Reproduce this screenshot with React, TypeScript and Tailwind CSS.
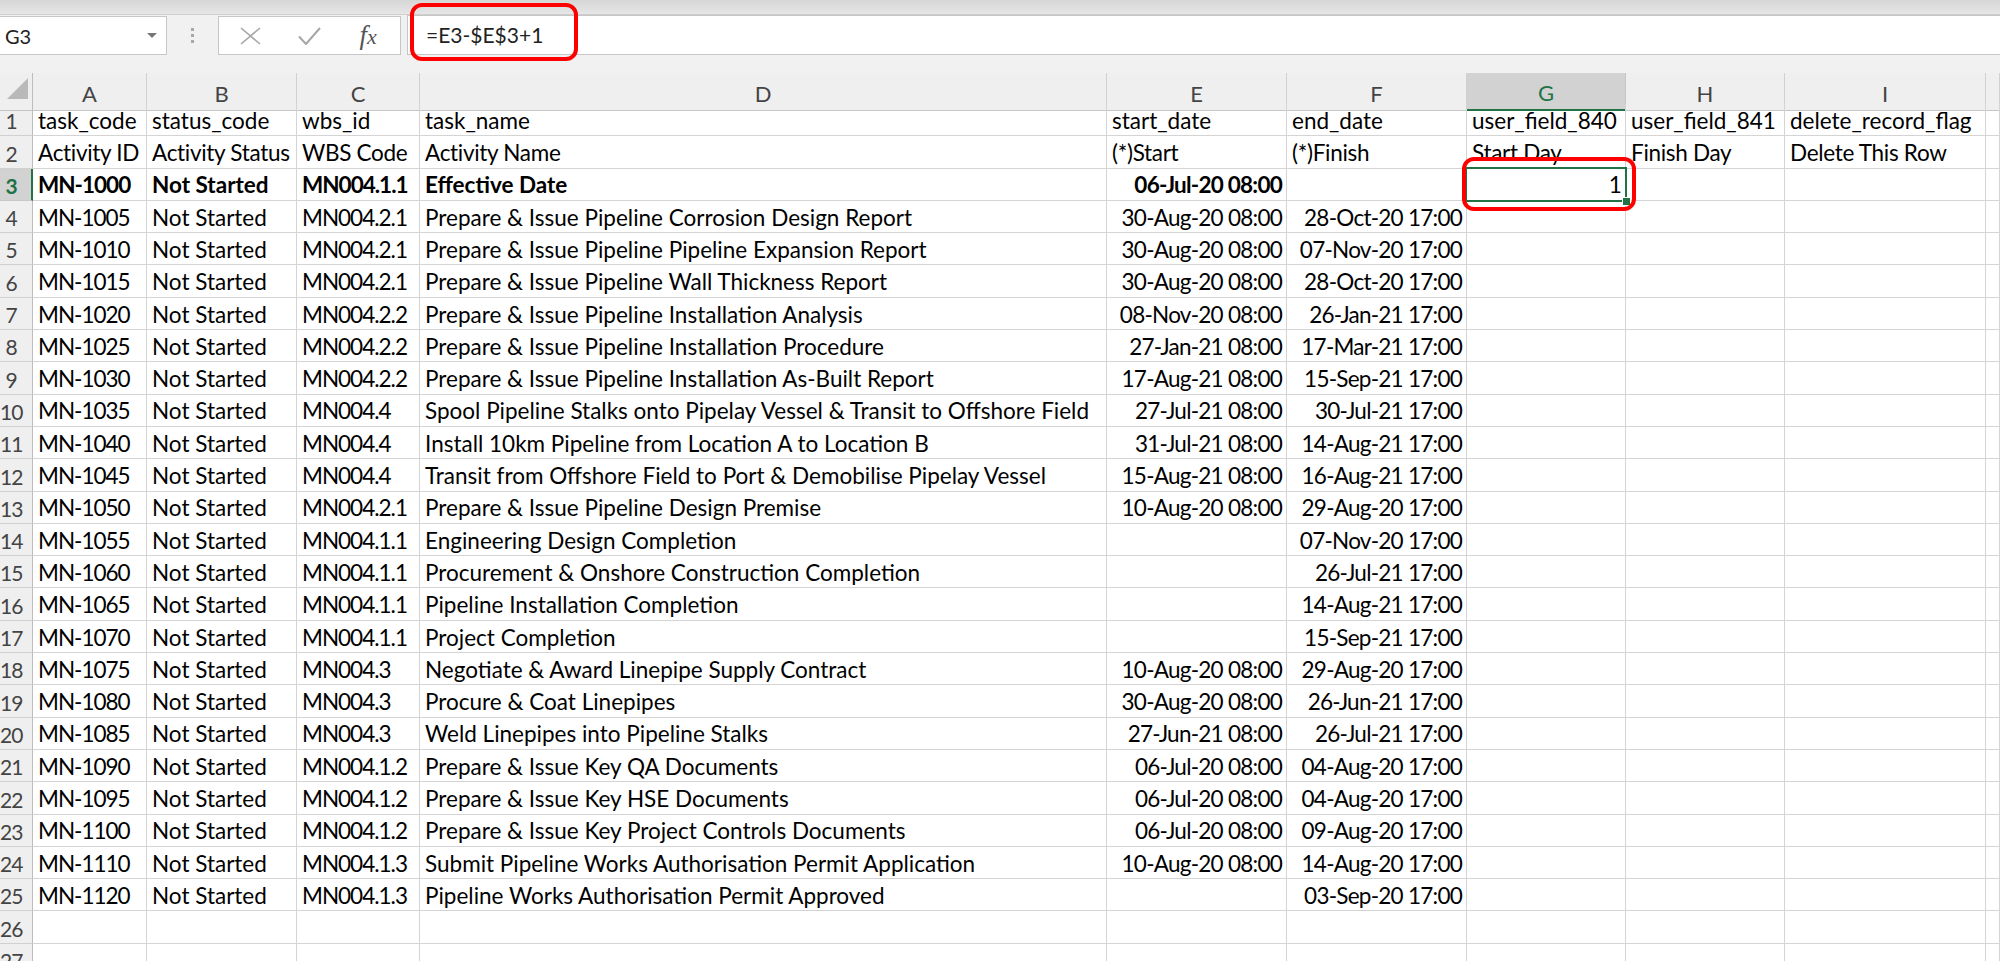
import React from "react"

type Row = {
  code: string
  status: string
  wbs: string
  name: string
  start: string
  finish: string
}

const rows: Row[] = [
  { code: "MN-1005", status: "Not Started", wbs: "MN004.2.1", name: "Prepare & Issue Pipeline Corrosion Design Report", start: "30-Aug-20 08:00", finish: "28-Oct-20 17:00" },
  { code: "MN-1010", status: "Not Started", wbs: "MN004.2.1", name: "Prepare & Issue Pipeline Pipeline Expansion Report", start: "30-Aug-20 08:00", finish: "07-Nov-20 17:00" },
  { code: "MN-1015", status: "Not Started", wbs: "MN004.2.1", name: "Prepare & Issue Pipeline Wall Thickness Report", start: "30-Aug-20 08:00", finish: "28-Oct-20 17:00" },
  { code: "MN-1020", status: "Not Started", wbs: "MN004.2.2", name: "Prepare & Issue Pipeline Installation Analysis", start: "08-Nov-20 08:00", finish: "26-Jan-21 17:00" },
  { code: "MN-1025", status: "Not Started", wbs: "MN004.2.2", name: "Prepare & Issue Pipeline Installation Procedure", start: "27-Jan-21 08:00", finish: "17-Mar-21 17:00" },
  { code: "MN-1030", status: "Not Started", wbs: "MN004.2.2", name: "Prepare & Issue Pipeline Installation As-Built Report", start: "17-Aug-21 08:00", finish: "15-Sep-21 17:00" },
  { code: "MN-1035", status: "Not Started", wbs: "MN004.4", name: "Spool Pipeline Stalks onto Pipelay Vessel & Transit to Offshore Field", start: "27-Jul-21 08:00", finish: "30-Jul-21 17:00" },
  { code: "MN-1040", status: "Not Started", wbs: "MN004.4", name: "Install 10km Pipeline from Location A to Location B", start: "31-Jul-21 08:00", finish: "14-Aug-21 17:00" },
  { code: "MN-1045", status: "Not Started", wbs: "MN004.4", name: "Transit from Offshore Field to Port & Demobilise Pipelay Vessel", start: "15-Aug-21 08:00", finish: "16-Aug-21 17:00" },
  { code: "MN-1050", status: "Not Started", wbs: "MN004.2.1", name: "Prepare & Issue Pipeline Design Premise", start: "10-Aug-20 08:00", finish: "29-Aug-20 17:00" },
  { code: "MN-1055", status: "Not Started", wbs: "MN004.1.1", name: "Engineering Design Completion", start: "", finish: "07-Nov-20 17:00" },
  { code: "MN-1060", status: "Not Started", wbs: "MN004.1.1", name: "Procurement & Onshore Construction Completion", start: "", finish: "26-Jul-21 17:00" },
  { code: "MN-1065", status: "Not Started", wbs: "MN004.1.1", name: "Pipeline Installation Completion", start: "", finish: "14-Aug-21 17:00" },
  { code: "MN-1070", status: "Not Started", wbs: "MN004.1.1", name: "Project Completion", start: "", finish: "15-Sep-21 17:00" },
  { code: "MN-1075", status: "Not Started", wbs: "MN004.3", name: "Negotiate & Award Linepipe Supply Contract", start: "10-Aug-20 08:00", finish: "29-Aug-20 17:00" },
  { code: "MN-1080", status: "Not Started", wbs: "MN004.3", name: "Procure & Coat Linepipes", start: "30-Aug-20 08:00", finish: "26-Jun-21 17:00" },
  { code: "MN-1085", status: "Not Started", wbs: "MN004.3", name: "Weld Linepipes into Pipeline Stalks", start: "27-Jun-21 08:00", finish: "26-Jul-21 17:00" },
  { code: "MN-1090", status: "Not Started", wbs: "MN004.1.2", name: "Prepare & Issue Key QA Documents", start: "06-Jul-20 08:00", finish: "04-Aug-20 17:00" },
  { code: "MN-1095", status: "Not Started", wbs: "MN004.1.2", name: "Prepare & Issue Key HSE Documents", start: "06-Jul-20 08:00", finish: "04-Aug-20 17:00" },
  { code: "MN-1100", status: "Not Started", wbs: "MN004.1.2", name: "Prepare & Issue Key Project Controls Documents", start: "06-Jul-20 08:00", finish: "09-Aug-20 17:00" },
  { code: "MN-1110", status: "Not Started", wbs: "MN004.1.3", name: "Submit Pipeline Works Authorisation Permit Application", start: "10-Aug-20 08:00", finish: "14-Aug-20 17:00" },
  { code: "MN-1120", status: "Not Started", wbs: "MN004.1.3", name: "Pipeline Works Authorisation Permit Approved", start: "", finish: "03-Sep-20 17:00" },
]

const grid =
  "grid grid-cols-[33px_114px_150px_123px_687px_180px_180px_159px_159px_201px_1fr]"

// Excel puts text at the bottom of the row
const cell = "border-r border-b border-[#d4d4d4] flex items-end pb-[3px] px-[5px] whitespace-nowrap leading-none"
// codes and dates: Lato digits run wider than the sheet's, so pull them in a little
const code = cell + " tracking-[-1px]"
const date = cell + " justify-end pr-[4px] tracking-[-0.75px]"
const label = cell + " tracking-[-0.3px]"

function RowHead({ n, active }: { n: number; active?: boolean }) {
  return (
    <div
      className={
        active
          ? "bg-[#d2d2d2] text-[#217346] border-r-2 border-r-[#217346] border-b border-b-[#c8c8c8] flex items-end pb-[4px] leading-none text-[21px] tracking-[-1px]"
          : "bg-[#efefef] text-[#444] border-r border-r-[#bdbdbd] border-b border-b-[#d0d0d0] flex items-end pb-[4px] leading-none text-[21px] tracking-[-1px]"
      }
    >
      <span className="w-[22px] text-center">{n}</span>
    </div>
  )
}

function ColHead({ label, active }: { label: string; active?: boolean }) {
  return (
    <div
      className={
        active
          ? "bg-[#d2d2d2] text-[#217346] border-r border-r-[#c6c6c6] border-b-2 border-b-[#217346] flex items-center justify-center pt-[3px] text-[22px]"
          : "bg-[#efefef] text-[#444] border-r border-r-[#d0d0d0] border-b border-b-[#c6c6c6] flex items-center justify-center pt-[3px] text-[22px]"
      }
    >
      {label}
    </div>
  )
}

function Blank({ n }: { n: number }) {
  return (
    <div className={grid + " h-[32.3px]"}>
      <RowHead n={n} />
      <div className={cell} />
      <div className={cell} />
      <div className={cell} />
      <div className={cell} />
      <div className={cell} />
      <div className={cell} />
      <div className={cell} />
      <div className={cell} />
      <div className={cell} />
      <div className={cell} />
    </div>
  )
}

export default function App() {
  return (
    <div className="relative w-[2000px] h-[961px] overflow-hidden bg-white text-[22.5px] text-black font-['Lato','Liberation_Sans',sans-serif]">
      {/* ribbon edge */}
      <div className="h-[15px] bg-gradient-to-b from-[#d6d6d6] to-[#e6e6e6] border-b border-[#cfcfcf]" />

      {/* formula bar */}
      <div className="h-[58px] bg-[#f1f1f1] flex items-start">
        <div className="mt-[1px] w-[167px] h-[39px] bg-white border border-l-0 border-[#c6c6c6] flex items-center justify-between pl-[5px] pr-[9px]">
          <span className="text-[20px] text-[#222]">G3</span>
          <span className="w-0 h-0 border-l-[5px] border-r-[5px] border-t-[5px] border-l-transparent border-r-transparent border-t-[#777]" />
        </div>
        <div className="w-[51px] h-[40px] flex flex-col items-center justify-center gap-[3px]">
          <span className="w-[3px] h-[3px] bg-[#a8a8a8]" />
          <span className="w-[3px] h-[3px] bg-[#a8a8a8]" />
          <span className="w-[3px] h-[3px] bg-[#a8a8a8]" />
        </div>
        <div className="mt-[1px] w-[183px] h-[39px] bg-white border border-[#c6c6c6] flex items-center">
          <div className="w-[64px] flex justify-center">
            <svg width="21" height="18" viewBox="0 0 21 18">
              <path d="M1 1 L20 17 M20 1 L1 17" stroke="#a6a6a6" strokeWidth="1.6" fill="none" />
            </svg>
          </div>
          <div className="w-[54px] flex justify-center">
            <svg width="23" height="18" viewBox="0 0 23 18">
              <path d="M1 9.5 L8 17 L22 1" stroke="#a6a6a6" strokeWidth="2" fill="none" />
            </svg>
          </div>
          <div className="w-[64px] flex justify-center">
            <span className="font-['Liberation_Serif',serif] italic text-[27px] text-[#555] leading-none">
              f<span className="text-[22px]">x</span>
            </span>
          </div>
        </div>
        <div className="ml-[6px] flex-1 h-[40px] bg-white border-y border-l border-[#c6c6c6] flex items-center pl-[18px]">
          <span className="text-[#222] text-[21px]">=E3-$E$3+1</span>
        </div>
      </div>

      {/* column headers */}
      <div className={grid + " h-[31px]"}>
        <div className="bg-[#efefef] border-r border-r-[#bdbdbd] border-b border-b-[#c6c6c6] relative">
          <svg className="absolute left-[7px] top-[5px]" width="22" height="21" viewBox="0 0 22 21">
            <path d="M21 0 L21 21 L0 21 Z" fill="#b9b9b9" />
          </svg>
        </div>
        <ColHead label="A" />
        <ColHead label="B" />
        <ColHead label="C" />
        <ColHead label="D" />
        <ColHead label="E" />
        <ColHead label="F" />
        <ColHead label="G" active />
        <ColHead label="H" />
        <ColHead label="I" />
        <ColHead label="" />
      </div>

      {/* row 1 */}
      <div className={grid + " h-[32.3px]"}>
        <RowHead n={1} />
        <div className={cell}>task_code</div>
        <div className={cell}>status_code</div>
        <div className={cell}>wbs_id</div>
        <div className={cell}>task_name</div>
        <div className={cell}>start_date</div>
        <div className={cell}>end_date</div>
        <div className={cell}>user_field_840</div>
        <div className={cell}>user_field_841</div>
        <div className={cell}>delete_record_flag</div>
        <div className={cell} />
      </div>

      {/* row 2 */}
      <div className={grid + " h-[32.3px]"}>
        <RowHead n={2} />
        <div className={label}>Activity ID</div>
        <div className={label}>Activity Status</div>
        <div className={label}>WBS Code</div>
        <div className={label}>Activity Name</div>
        <div className={label}>(*)Start</div>
        <div className={label}>(*)Finish</div>
        <div className={label}>Start Day</div>
        <div className={label}>Finish Day</div>
        <div className={label}>Delete This Row</div>
        <div className={cell} />
      </div>

      {/* row 3, bold, G3 selected */}
      <div className={grid + " h-[32.3px] font-bold"}>
        <RowHead n={3} active />
        <div className={code}>MN-1000</div>
        <div className={cell}>Not Started</div>
        <div className={code}>MN004.1.1</div>
        <div className={cell}>Effective Date</div>
        <div className={date}>06-Jul-20 08:00</div>
        <div className={cell} />
        <div className={date + " relative font-normal"}>
          1
          <div className="absolute left-[-2px] top-[-2px] right-[-2px] bottom-[-2px] border-2 border-[#217346]" />
          <div className="absolute right-[-6px] bottom-[-6px] w-[9px] h-[9px] bg-[#217346] border border-white" />
        </div>
        <div className={cell} />
        <div className={cell} />
        <div className={cell} />
      </div>

      {rows.map((r, i) => (
        <div key={r.code} className={grid + " h-[32.3px]"}>
          <RowHead n={i + 4} />
          <div className={code}>{r.code}</div>
          <div className={cell}>{r.status}</div>
          <div className={code}>{r.wbs}</div>
          <div className={cell}>{r.name}</div>
          <div className={date}>{r.start}</div>
          <div className={date}>{r.finish}</div>
          <div className={cell} />
          <div className={cell} />
          <div className={cell} />
          <div className={cell} />
        </div>
      ))}

      <Blank n={26} />
      <Blank n={27} />

      {/* red annotation boxes */}
      <div className="absolute left-[410px] top-[3px] w-[168px] h-[58px] border-4 border-[#ff0000] rounded-[12px]" />
      <div className="absolute left-[1462px] top-[157px] w-[174px] h-[54px] border-4 border-[#ff0000] rounded-[12px]" />
    </div>
  )
}
